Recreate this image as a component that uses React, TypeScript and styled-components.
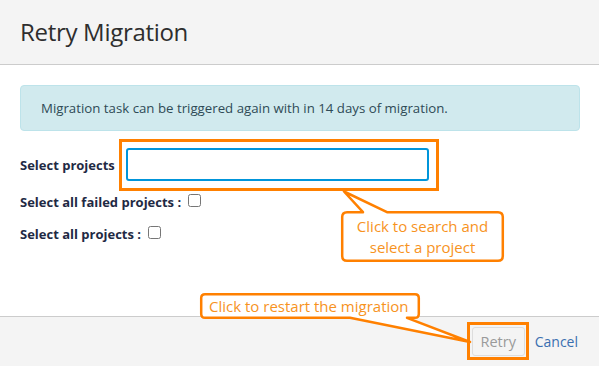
import React from "react";
import styled, { createGlobalStyle } from "styled-components";

const GlobalStyle = createGlobalStyle`
  html, body {
    margin: 0;
    padding: 0;
    background: #ffffff;
  }
  body {
    font-family: "Open Sans", "Liberation Sans", sans-serif;
    color: #333333;
  }
`;

const ORANGE = "#ff8000";

function App() {
  return (
    <>
      <GlobalStyle />
      <StModal>
        <StHeader>
          <StTitle>Retry Migration</StTitle>
        </StHeader>

        <StBody>
          <StAlert>Migration task can be triggered again with in 14 days of migration.</StAlert>

          <StRow>
            <StLabel>Select projects</StLabel>
            <StHighlight $inset="-9px -10px -10px -7px">
              <StInput type="text" />
            </StHighlight>
          </StRow>
          <StRow>
            <StLabel>Select all failed projects :</StLabel>
            <StCheckbox type="checkbox" />
          </StRow>
          <StRow>
            <StLabel>Select all projects :</StLabel>
            <StCheckbox type="checkbox" />
          </StRow>
        </StBody>

        <StFooter>
          <StHighlight $inset="-5px -4px -4px -5px">
            <StRetryButton disabled>Retry</StRetryButton>
          </StHighlight>
          <StCancel>Cancel</StCancel>
        </StFooter>

        <StCallout $left={341} $top={211} $width={163} $height={51}>
          <StBubble viewBox="0 0 163 51" width="163" height="51">
            <path d="M6 1.2 L22 1.2 L3 -19.5 L46 1.2 L157 1.2 Q161.8 1.2 161.8 6 L161.8 45 Q161.8 49.8 157 49.8 L6 49.8 Q1.2 49.8 1.2 45 L1.2 6 Q1.2 1.2 6 1.2 Z" />
          </StBubble>
          <StCalloutText $align="center">
            Click to search and
            <br />
            select a project
          </StCalloutText>
        </StCallout>

        <StCallout $left={200} $top={293} $width={220} $height={26}>
          <StBubble viewBox="0 0 220 26" width="220" height="26">
            <path d="M5 1.2 L215 1.2 Q218.8 1.2 218.8 5 L218.8 21 Q218.8 24.8 215 24.8 L207 24.8 L270 49 L150 24.8 L5 24.8 Q1.2 24.8 1.2 21 L1.2 5 Q1.2 1.2 5 1.2 Z" />
          </StBubble>
          <StCalloutText $align="left">Click to restart the migration</StCalloutText>
        </StCallout>
      </StModal>
    </>
  );
}

export default App;

const StModal = styled.div`
  position: relative;
  width: 599px;
  height: 366px;
  display: flex;
  flex-direction: column;
  overflow: hidden;
`;

const StHeader = styled.div`
  height: 65px;
  box-sizing: border-box;
  display: flex;
  align-items: center;
  padding: 0 20px 2px 20px;
  background: #f4f4f4;
  border-bottom: 1px solid #cccccc;
`;

const StTitle = styled.h1`
  margin: 0;
  font-size: 24px;
  font-weight: 500;
  letter-spacing: -0.3px;
  color: #2e2e2e;
`;

const StBody = styled.div`
  flex: 1;
  padding: 20px 19px 0 20px;
`;

const StAlert = styled.div`
  height: 46px;
  box-sizing: border-box;
  display: flex;
  align-items: center;
  padding: 0 20px;
  margin-bottom: 17px;
  background: #d1eaee;
  border: 1px solid #bde3ea;
  border-radius: 4px;
  font-size: 13.25px;
  color: #2f4a56;
`;

const StRow = styled.div`
  display: flex;
  align-items: center;
  margin-bottom: 9px;
  min-height: 23px;
`;

const StLabel = styled.label`
  font-size: 13px;
  font-weight: 700;
  color: #1f2a44;
  margin-right: 7px;
`;

const StHighlight = styled.span<{ $inset: string }>`
  position: relative;
  display: inline-flex;
  margin-left: 4px;

  &::after {
    content: "";
    position: absolute;
    inset: ${(props) => props.$inset};
    border: 3px solid ${ORANGE};
    pointer-events: none;
  }
`;

const StInput = styled.input`
  width: 303px;
  height: 33px;
  box-sizing: border-box;
  border: 2px solid #0095da;
  border-radius: 3px;
  outline: none;
  padding: 0 4px;
  font-size: 14px;
`;

const StCheckbox = styled.input`
  width: 13px;
  height: 13px;
  margin: 0 0 2px 0;
`;

const StFooter = styled.div`
  height: 50px;
  box-sizing: border-box;
  display: flex;
  align-items: center;
  justify-content: flex-end;
  gap: 10px;
  padding: 0 21px 0 0;
  background: #f4f4f4;
  border-top: 1px solid #cccccc;
`;

const StRetryButton = styled.button`
  width: 53px;
  height: 29px;
  box-sizing: border-box;
  background: #f4f4f4;
  border: 1px solid #dddddd;
  border-radius: 3px;
  font-family: inherit;
  font-size: 14.5px;
  color: #9a9a9a;
  padding: 0;
`;

const StCancel = styled.a`
  font-size: 14px;
  color: #3a6fb0;
  cursor: pointer;
`;

const StCallout = styled.div<{ $left: number; $top: number; $width: number; $height: number }>`
  position: absolute;
  left: ${(props) => props.$left}px;
  top: ${(props) => props.$top}px;
  width: ${(props) => props.$width}px;
  height: ${(props) => props.$height}px;
  display: flex;
  align-items: center;
`;

const StBubble = styled.svg`
  position: absolute;
  left: 0;
  top: 0;
  overflow: visible;

  path {
    fill: #ffffff;
    stroke: ${ORANGE};
    stroke-width: 2.5;
    stroke-linejoin: round;
  }
`;

const StCalloutText = styled.div<{ $align: "left" | "center" }>`
  position: relative;
  width: 100%;
  box-sizing: border-box;
  padding: ${(props) => (props.$align === "left" ? "0 0 0 9px" : "0")};
  text-align: ${(props) => props.$align};
  font-size: 15px;
  line-height: 21px;
  color: #f7931e;
`;
